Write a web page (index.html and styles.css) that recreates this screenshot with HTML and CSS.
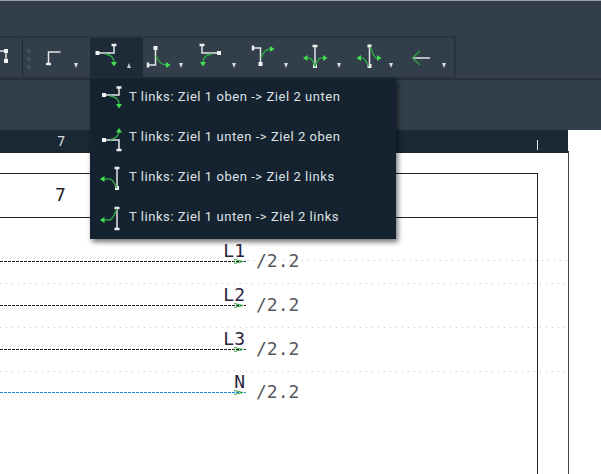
FILE: index.html
```html
<!DOCTYPE html>
<html lang="de">
<head>
<meta charset="utf-8">
<title>Verbindungen</title>
<link rel="stylesheet" href="styles.css">
</head>
<body>
<header class="topbar"></header>
<nav class="toolrow">
  <div class="group">
    <div class="clip">
      <svg width="10" height="28" viewBox="0 0 10 28"><path class="w" d="M0 9H6V19"/><rect class="sq" x="4" y="7" width="4" height="4"/><rect class="sq" x="4" y="17" width="4" height="4"/></svg>
    </div>
    <div class="grip"><i></i><i></i><i></i></div>
    <div class="btn">
      <svg width="32" height="28" viewBox="0 0 32 28"><path class="w" d="M6.500 23V11H18.500"/><path class="cap" d="M4 23H9"/></svg>
      <span class="arrow"></span>
    </div>
    <div class="btn active">
      <svg width="32" height="28" viewBox="0 0 32 28"><path class="w" d="M3 12H20V4"/><path class="cap" d="M17.500 4H22.500"/><rect class="sq" x="1.500" y="10" width="4" height="4"/><path class="g" d="M11 13C17 14 20 16 20 22"/><path class="gh" d="M17 21H23L20 25.500Z"/></svg>
      <span class="arrow up"></span>
    </div>
    <div class="btn">
      <svg width="32" height="28" viewBox="0 0 32 28"><path class="w" d="M8.500 7V24H1"/><rect class="sq" x="6.500" y="5" width="4" height="4"/><path class="cap" d="M1 21.500V26.500"/><path class="g" d="M9 15C12 21 14 24 20 24"/><path class="gh" d="M19 21V27L23.500 24Z"/></svg>
      <span class="arrow"></span>
    </div>
    <div class="btn">
      <svg width="32" height="28" viewBox="0 0 32 28"><path class="w" d="M3 4V12H20"/><path class="cap" d="M.5 4H5.500"/><rect class="sq" x="18" y="10" width="4" height="4"/><path class="g" d="M13 13C7 14 4 16 4 22"/><path class="gh" d="M1 21H7L4 25.500Z"/></svg>
      <span class="arrow"></span>
    </div>
    <div class="btn">
      <svg width="32" height="28" viewBox="0 0 32 28"><path class="w" d="M1 7H8.500V23"/><path class="cap" d="M1 4.500V9.500"/><rect class="sq" x="6.500" y="21" width="4" height="4"/><path class="g" d="M9 17C12 10 14 8 19 8"/><path class="gh" d="M18 5V11L22.500 8Z"/></svg>
      <span class="arrow"></span>
    </div>
    <div class="btn">
      <svg width="32" height="28" viewBox="0 0 32 28"><path class="w" d="M11 5V25"/><path class="cap" d="M8.500 5H13.500"/><rect class="sq" x="9" y="23" width="4" height="4"/><path class="g" d="M3 17H5C8 17 9 21 11 25C13 21 14 17 17 17H20"/><path class="gh" d="M3.500 14V20L-1 17Z"/><path class="gh" d="M19 14V20L23.500 17Z"/></svg>
      <span class="arrow"></span>
    </div>
    <div class="btn">
      <svg width="32" height="28" viewBox="0 0 32 28"><path class="w" d="M12.500 5V25"/><rect class="sq" x="10.500" y="3.500" width="4" height="3"/><rect class="sq" x="10.500" y="23" width="4" height="4"/><path class="g" d="M3 17H5C8 17 9 21 12 25"/><path class="g" d="M13 6C16 10 16 17 20 17H21"/><path class="gh" d="M4 14V20L-.5 17Z"/><path class="gh" d="M20 14V20L24.500 17Z"/></svg>
      <span class="arrow"></span>
    </div>
    <div class="btn">
      <svg width="32" height="28" viewBox="0 0 32 28"><path class="w" d="M3.500 17H21"/><path class="gt" d="M11 10L3.500 17L11 24"/></svg>
      <span class="arrow"></span>
    </div>
  </div>
</nav>
<div class="subrow"></div>
<div class="workspace">
  <div class="ruler">
    <span class="rnum">7</span>
    <span class="rtick"></span>
  </div>
  <main class="sheet">
    <div class="frame"><span class="framenum">7</span></div>
    <div class="dots d4"></div>
    <div class="dots d1"></div>
    <div class="dots d2"></div>
    <div class="dots d3"></div>
    <div class="wire w1"><b class="net">L1</b><svg class="tip" width="10" height="5" viewBox="0 0 10 5"><path d="M0 .5L9 2.500L0 4.500"/></svg><span class="ref">/2.2</span></div>
    <div class="wire w2"><b class="net">L2</b><svg class="tip" width="10" height="5" viewBox="0 0 10 5"><path d="M0 .5L9 2.500L0 4.500"/></svg><span class="ref">/2.2</span></div>
    <div class="wire w3"><b class="net">L3</b><svg class="tip" width="10" height="5" viewBox="0 0 10 5"><path d="M0 .5L9 2.500L0 4.500"/></svg><span class="ref">/2.2</span></div>
    <div class="wire w4 blue"><b class="net">N</b><svg class="tip" width="10" height="5" viewBox="0 0 10 5"><path d="M0 .5L9 2.500L0 4.500"/></svg><span class="ref">/2.2</span></div>
  </main>
</div>
<ul class="menu">
  <li>
    <svg width="26" height="32" viewBox="0 0 26 32"><path class="w" d="M2 15H17V8"/><path class="cap" d="M14.500 7.500H19.500"/><rect class="sq" x="0" y="13" width="4" height="4"/><path class="g" d="M8 16C14 17 17 19 17 25"/><path class="gh" d="M14 24H20L17 28.500Z"/></svg>
    <span>T links: Ziel 1 oben -&gt; Ziel 2 unten</span>
  </li>
  <li>
    <svg width="26" height="32" viewBox="0 0 26 32"><path class="w" d="M2 20H17V30"/><path class="cap" d="M14.500 30H19.500"/><rect class="sq" x="0" y="18" width="4" height="4"/><path class="g" d="M8 19.500C14 18.500 17 16 17 11"/><path class="gh" d="M14 12.500H20L17 8Z"/></svg>
    <span>T links: Ziel 1 unten -&gt; Ziel 2 oben</span>
  </li>
  <li>
    <svg width="26" height="32" viewBox="0 0 26 32"><path class="w" d="M15 8V28"/><path class="cap" d="M12.500 8H17.500"/><rect class="sq" x="13" y="26" width="4" height="4"/><path class="g" d="M2 19H7C11 19 12 23 15 28"/><path class="gh" d="M2.500 16V22L-2 19Z"/></svg>
    <span>T links: Ziel 1 oben -&gt; Ziel 2 links</span>
  </li>
  <li>
    <svg width="26" height="32" viewBox="0 0 26 32"><path class="w" d="M15 8V29"/><path class="cap" d="M12.500 8H17.500"/><path class="cap" d="M12.500 29H17.500"/><path class="g" d="M2 20H7C11 20 12 14 15 9"/><path class="gh" d="M2.500 17V23L-2 20Z"/></svg>
    <span>T links: Ziel 1 unten -&gt; Ziel 2 links</span>
  </li>
</ul>
</body>
</html>
```
FILE: styles.css
```css
* { box-sizing: border-box; }
html, body { margin: 0; padding: 0; height: 100%; }
body {
  width: 601px;
  height: 474px;
  overflow: hidden;
  position: relative;
  display: flex;
  flex-direction: column;
  background: #fff;
  font-family: Roboto, "Liberation Sans", sans-serif;
}
svg { display: block; overflow: visible; flex: none; }
.w { fill: none; stroke: #e4e6e8; stroke-width: 1.5; }
.cap { fill: none; stroke: #eceeef; stroke-width: 2.5; }
.sq { fill: #f2f3f4; }
.g { fill: none; stroke: #2fa345; stroke-width: 1.5; }
.gt { fill: none; stroke: #2fa345; stroke-width: 1.3; }
.gh { fill: #45e04f; }

.topbar {
  height: 36px;
  flex: none;
  background: #323e49;
  border-top: 1px solid #9a9fa4;
}
.toolrow {
  height: 44px;
  flex: none;
  background: #323e49;
  border-bottom: 2px solid #272f38;
}
.group {
  width: 456px;
  height: 42px;
  display: flex;
  border-top: 2px solid #2a343e;
  border-right: 2px solid #2a343e;
  border-bottom: 1px solid #2a343e;
  align-items: stretch;
}
.clip {
  width: 23px;
  flex: none;
  border-right: 1px solid #232c35;
  padding-top: 4px;
  display: flex;
}
.grip {
  width: 14.5px;
  flex: none;
  display: flex;
  flex-direction: column;
  gap: 4px;
  padding: 11px 0 0 4px;
}
.grip i { width: 4px; height: 4px; border-radius: 50%; background: #45525e; }
.btn {
  width: 52.5px;
  flex: none;
  display: flex;
  padding: 3px 0 0 4px;
  position: relative;
}
.active { background: #1d2a37; }
.arrow {
  position: absolute;
  left: 36.500px;
  top: 25px;
  width: 0;
  height: 0;
  border-left: 2.500px solid transparent;
  border-right: 2.500px solid transparent;
  border-top: 5px solid #d8dadc;
}
.arrow.up { border-top: 0; border-bottom: 5px solid #c4c8cc; }

.subrow { height: 50px; flex: none; background: #323e49; }

.workspace { flex: 1; display: flex; flex-direction: column; min-height: 0; }
.ruler {
  width: 568px;
  height: 21px;
  flex: none;
  position: relative;
  background: #1b2835;
  color: #d5d8da;
  font: 14px/18px "DejaVu Sans Mono", monospace;
}
.rnum { position: absolute; left: 57px; top: 2px; }
.rtick { position: absolute; left: 537px; top: 10px; width: 1px; height: 10px; background: #e8eaeb; }

.sheet {
  width: 569px;
  flex: 1;
  position: relative;
  background: #fff;
  border-top: 2px solid #1c242c;
  border-right: 1px solid #444;
}
.frame {
  position: absolute;
  left: -1px;
  top: 20px;
  width: 539px;
  height: 322px;
  border: 1px solid #222;
  border-left: 0;
  border-bottom: 0;
}
.frame::after {
  content: "";
  position: absolute;
  left: 0;
  right: 0;
  top: 43px;
  height: 1px;
  background: #222;
}
.framenum {
  position: absolute;
  left: 56px;
  top: 11px;
  font: 18px/20px "DejaVu Sans Mono", monospace;
  color: #222;
}
.dots {
  position: absolute;
  left: 0;
  right: 0;
  height: 1px;
  background: repeating-linear-gradient(90deg, #c8c8c8 0 1px, transparent 1px 6px);
}
.d1 { top: 130px; }
.d2 { top: 174px; }
.d3 { top: 218px; }
.d4 { top: 107px; left: 248px; }

.wire {
  position: absolute;
  left: 0;
  width: 246px;
  height: 1px;
  background: repeating-linear-gradient(90deg, #222 0 3px, transparent 3px 4px);
}
.w1 { top: 108px; }
.w2 { top: 152px; }
.w3 { top: 196px; }
.w4 { top: 239px; }
.blue { background: repeating-linear-gradient(90deg, #1e88e5 0 3px, transparent 3px 4px); }
.net {
  position: absolute;
  right: 1px;
  bottom: 1px;
  font: 400 18px/20px "DejaVu Sans Mono", monospace;
  color: #2c2440;
}
.tip {
  position: absolute;
  right: 2px;
  top: -2px;
  fill: none;
  stroke: #2fa345;
  stroke-width: 1;
}
.ref {
  position: absolute;
  left: 256px;
  top: -10px;
  font: 18px/20px "DejaVu Sans Mono", monospace;
  color: #55585c;
}

.menu {
  position: absolute;
  left: 90px;
  top: 78px;
  width: 306px;
  height: 161px;
  margin: 0;
  padding: 0;
  list-style: none;
  background: #15222f;
  box-shadow: 2px 3px 5px rgba(0, 0, 0, .55);
  color: #dfe2e4;
  font-size: 13px;
  letter-spacing: .55px;
}
.menu li {
  height: 40px;
  display: flex;
  align-items: center;
  padding: 0 0 4px 12px;
  gap: 1px;
}
```
